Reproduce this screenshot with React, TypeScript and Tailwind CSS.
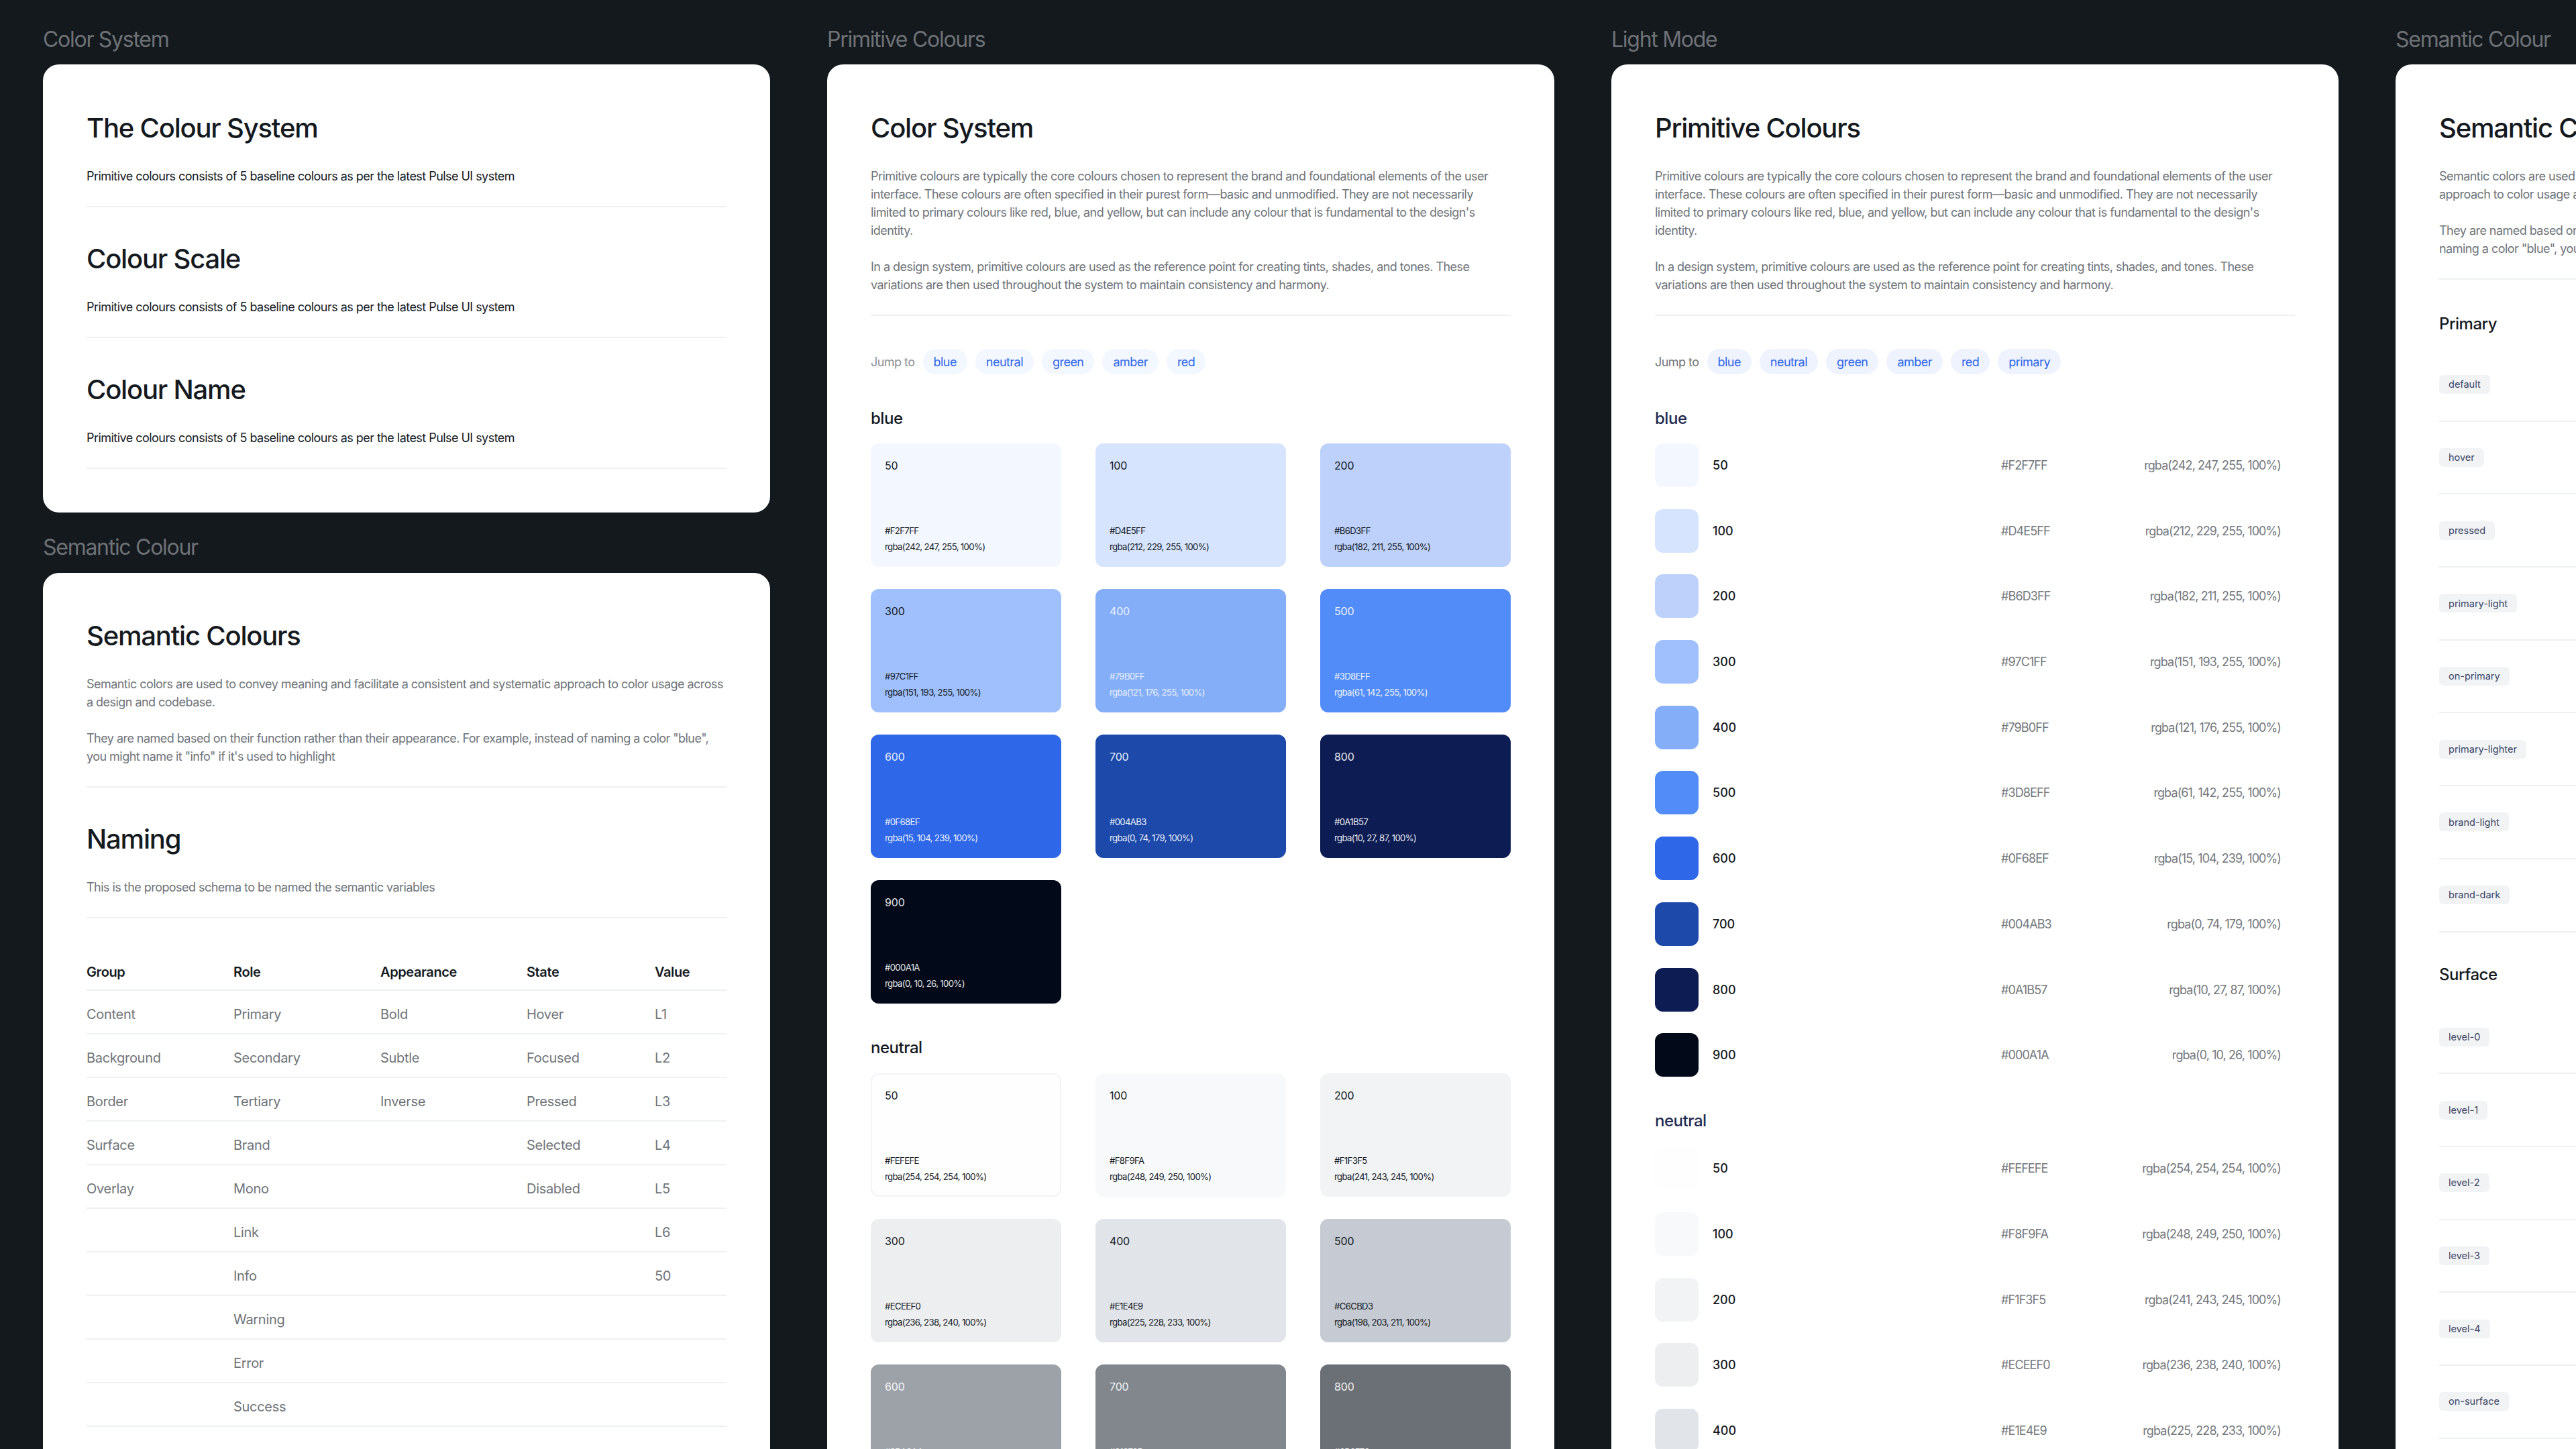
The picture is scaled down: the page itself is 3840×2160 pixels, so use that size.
import React from "react";

type Swatch = { name: string; hex: string; rgba: string; bg: string; text: string; ring?: boolean };

const blue: Swatch[] = [
  { name: "50", hex: "#F2F7FF", rgba: "rgba(242, 247, 255, 100%)", bg: "bg-[#f3f7ff]", text: "text-[#14191e]" },
  { name: "100", hex: "#D4E5FF", rgba: "rgba(212, 229, 255, 100%)", bg: "bg-[#d6e4fe]", text: "text-[#14191e]" },
  { name: "200", hex: "#B6D3FF", rgba: "rgba(182, 211, 255, 100%)", bg: "bg-[#bdd1fb]", text: "text-[#14191e]" },
  { name: "300", hex: "#97C1FF", rgba: "rgba(151, 193, 255, 100%)", bg: "bg-[#9fc0fc]", text: "text-[#14191e]" },
  { name: "400", hex: "#79B0FF", rgba: "rgba(121, 176, 255, 100%)", bg: "bg-[#85aef9]", text: "text-white/80" },
  { name: "500", hex: "#3D8EFF", rgba: "rgba(61, 142, 255, 100%)", bg: "bg-[#528cf8]", text: "text-white/90" },
  { name: "600", hex: "#0F68EF", rgba: "rgba(15, 104, 239, 100%)", bg: "bg-[#2e67e8]", text: "text-white/90" },
  { name: "700", hex: "#004AB3", rgba: "rgba(0, 74, 179, 100%)", bg: "bg-[#1d4aaa]", text: "text-white/90" },
  { name: "800", hex: "#0A1B57", rgba: "rgba(10, 27, 87, 100%)", bg: "bg-[#0d1c53]", text: "text-white/90" },
  { name: "900", hex: "#000A1A", rgba: "rgba(0, 10, 26, 100%)", bg: "bg-[#020918]", text: "text-white/90" },
];

const neutral: Swatch[] = [
  { name: "50", hex: "#FEFEFE", rgba: "rgba(254, 254, 254, 100%)", bg: "bg-[#fefefe]", text: "text-[#14191e]", ring: true },
  { name: "100", hex: "#F8F9FA", rgba: "rgba(248, 249, 250, 100%)", bg: "bg-[#f8f9fa]", text: "text-[#14191e]" },
  { name: "200", hex: "#F1F3F5", rgba: "rgba(241, 243, 245, 100%)", bg: "bg-[#f1f3f5]", text: "text-[#14191e]" },
  { name: "300", hex: "#ECEEF0", rgba: "rgba(236, 238, 240, 100%)", bg: "bg-[#eceef0]", text: "text-[#14191e]" },
  { name: "400", hex: "#E1E4E9", rgba: "rgba(225, 228, 233, 100%)", bg: "bg-[#e1e4e9]", text: "text-[#14191e]" },
  { name: "500", hex: "#C6CBD3", rgba: "rgba(198, 203, 211, 100%)", bg: "bg-[#c6cbd3]", text: "text-[#14191e]" },
  { name: "600", hex: "#9DA3AA", rgba: "rgba(157, 163, 170, 100%)", bg: "bg-[#9da2a9]", text: "text-white/90" },
  { name: "700", hex: "#81878D", rgba: "rgba(129, 135, 141, 100%)", bg: "bg-[#81878d]", text: "text-white/90" },
  { name: "800", hex: "#6B6F76", rgba: "rgba(107, 111, 118, 100%)", bg: "bg-[#6b6f76]", text: "text-white/90" },
];

const table = [
  ["Content", "Primary", "Bold", "Hover", "L1"],
  ["Background", "Secondary", "Subtle", "Focused", "L2"],
  ["Border", "Tertiary", "Inverse", "Pressed", "L3"],
  ["Surface", "Brand", "", "Selected", "L4"],
  ["Overlay", "Mono", "", "Disabled", "L5"],
  ["", "Link", "", "", "L6"],
  ["", "Info", "", "", "50"],
  ["", "Warning", "", "", ""],
  ["", "Error", "", "", ""],
  ["", "Success", "", "", ""],
];

const Label = ({ children, className = "" }: { children: React.ReactNode; className?: string }) => (
  <div className={`h-[38px] text-[32px] leading-[38px] tracking-[-0.04em] text-[#6e7276] ${className}`}>{children}</div>
);

const Title = ({ children, className = "" }: { children: React.ReactNode; className?: string }) => (
  <h1 className={`h-[48px] text-[40px] font-medium leading-[48px] tracking-[-0.03em] text-[#14191e] whitespace-nowrap ${className}`}>{children}</h1>
);

const Body = ({ children, className = "" }: { children: React.ReactNode; className?: string }) => (
  <p className={`text-[18px] leading-[27px] tracking-[-0.03em] text-[#6f7479] ${className}`}>{children}</p>
);

const Heading = ({ children, className = "" }: { children: React.ReactNode; className?: string }) => (
  <h2 className={`h-[32px] text-[24px] font-medium leading-[32px] tracking-[-0.02em] text-[#14191e] ${className}`}>{children}</h2>
);

const Rule = () => <div className="h-[2px] bg-[#eef0f2]" />;

const Overview = ({ title, first }: { title: string; first?: boolean }) => (
  <div className={first ? "" : "mt-[53px]"}>
    <Title>{title}</Title>
    <p className="mt-[34px] mb-[31px] text-[18px] leading-[27px] tracking-[-0.03em] text-[#14191e]">
      Primitive colours consists of 5 baseline colours as per the latest Pulse UI system
    </p>
    <Rule />
  </div>
);

const Intro = ({ title }: { title: string }) => (
  <>
    <Title>{title}</Title>
    <Body className="mt-[34px]">
      Primitive colours are typically the core colours chosen to represent the brand and foundational elements of the
      user interface. These colours are often specified in their purest form—basic and unmodified. They are not
      necessarily limited to primary colours like red, blue, and yellow, but can include any colour that is fundamental
      to the design's identity.
    </Body>
    <Body className="mt-[27px] mb-[31px]">
      In a design system, primitive colours are used as the reference point for creating tints, shades, and tones. These
      variations are then used throughout the system to maintain consistency and harmony.
    </Body>
    <Rule />
  </>
);

const JumpTo = ({ items, chip, label }: { items: string[]; chip: string; label: string }) => (
  <div className="mt-[49px] flex h-[38px] items-center gap-[12px] text-[18px] tracking-[-0.03em]">
    <span className={label}>Jump to</span>
    {items.map((item) => (
      <span key={item} className={`flex h-[38px] items-center rounded-full px-[16px] text-[#2f66e8] ${chip}`}>
        {item}
      </span>
    ))}
  </div>
);

const SwatchCard = ({ s }: { s: Swatch }) => (
  <div
    className={`flex h-[184px] flex-col justify-between rounded-xl pt-[21px] pb-[18px] pl-[21px] ${s.bg} ${s.text} ${
      s.ring ? "ring-2 ring-inset ring-[#f3f4f6]" : ""
    }`}
  >
    <div className="text-[16px] leading-[24px] tracking-[-0.01em]">{s.name}</div>
    <div className="text-[13.2px] leading-[24px] tracking-[-0.05em]">
      <div>{s.hex}</div>
      <div>{s.rgba}</div>
    </div>
  </div>
);

const SwatchRow = ({ s }: { s: Swatch }) => (
  <div className="mb-[32.7px] flex h-[65px] items-center text-[18px]">
    <div className={`h-[65px] w-[65px] shrink-0 rounded-xl ${s.bg}`} />
    <div className="ml-[21px] w-[430px] font-medium text-[#14191e]">{s.name}</div>
    <div className="flex-1 tracking-[-0.05em] text-[#74787d]">{s.hex}</div>
    <div className="pr-[21px] tracking-[-0.05em] text-[#74787d]">{s.rgba}</div>
  </div>
);

const Tag = ({ name }: { name: string }) => (
  <div className="flex h-[108.7px] items-center border-b-2 border-[#eef0f2]">
    <span className="flex h-[28px] items-center rounded-md bg-[#f1f3f5] px-[14px] text-[14.5px] text-[#3a4565]">{name}</span>
  </div>
);

export default function App() {
  return (
    <div className="flex h-[2160px] w-[3840px] gap-[85px] overflow-hidden bg-[#14191e] pl-[64px] pt-[40px] font-['Inter',sans-serif]">
      <div className="w-[1084px] shrink-0">
        <Label>Color System</Label>
        <div className="mt-[18px] h-[668px] rounded-3xl bg-white px-[65px] pt-[71px]">
          <Overview title="The Colour System" first />
          <Overview title="Colour Scale" />
          <Overview title="Colour Name" />
        </div>
        <Label className="mt-[33px]">Semantic Colour</Label>
        <div className="mt-[19px] h-[1400px] rounded-3xl bg-white px-[65px] pt-[70px]">
          <Title>Semantic Colours</Title>
          <Body className="mt-[34px]">
            Semantic colors are used to convey meaning and facilitate a consistent and systematic approach to color usage
            across a design and codebase.
          </Body>
          <Body className="mt-[27px] mb-[31px]">
            They are named based on their function rather than their appearance. For example, instead of naming a color
            "blue", you might name it "info" if it's used to highlight
          </Body>
          <Rule />
          <Title className="mt-[53px]">Naming</Title>
          <Body className="mt-[34px] mb-[31px]">This is the proposed schema to be named the semantic variables</Body>
          <Rule />
          <div className="grid h-[108px] grid-cols-[219px_219px_218px_191px_1fr] items-end border-b-2 border-[#eef0f2] pb-[14px] text-[20px] font-semibold leading-[24px] tracking-[-0.02em] text-[#14191e]">
            <span>Group</span>
            <span>Role</span>
            <span>Appearance</span>
            <span>State</span>
            <span>Value</span>
          </div>
          {table.map((row, i) => (
            <div
              key={i}
              className="grid h-[65px] grid-cols-[219px_219px_218px_191px_1fr] items-center border-b-2 border-[#eef0f2] pt-[6px] text-[20px] tracking-[-0.015em] text-[#6f7479]"
            >
              {row.map((cell, j) => (
                <span key={j}>{cell}</span>
              ))}
            </div>
          ))}
        </div>
      </div>

      <div className="w-[1084px] shrink-0">
        <Label>Primitive Colours</Label>
        <div className="mt-[18px] h-[2200px] rounded-3xl bg-white px-[65px] pt-[71px]">
          <Intro title="Color System" />
          <JumpTo items={["blue", "neutral", "green", "amber", "red"]} chip="bg-[#f3f7ff]" label="text-[#8b9095]" />
          <Heading className="mt-[50px]">blue</Heading>
          <div className="mt-[21px] grid grid-cols-3 gap-x-[51px] gap-y-[33px]">
            {blue.map((s) => (
              <SwatchCard key={s.name} s={s} />
            ))}
          </div>
          <Heading className="mt-[50px]">neutral</Heading>
          <div className="mt-[22px] grid grid-cols-3 gap-x-[51px] gap-y-[33px]">
            {neutral.map((s) => (
              <SwatchCard key={s.name} s={s} />
            ))}
          </div>
        </div>
      </div>

      <div className="w-[1084px] shrink-0">
        <Label>Light Mode</Label>
        <div className="mt-[18px] h-[2200px] rounded-3xl bg-white px-[65px] pt-[71px]">
          <Intro title="Primitive Colours" />
          <JumpTo items={["blue", "neutral", "green", "amber", "red", "primary"]} chip="bg-[#eef3fe]" label="text-[#6f7479]" />
          <Heading className="mt-[50px] mb-[21px] !text-[#1e2a4f]">blue</Heading>
          {blue.map((s) => (
            <SwatchRow key={s.name} s={s} />
          ))}
          <Heading className="mt-[50px] mb-[22px] !text-[#1e2a4f]">neutral</Heading>
          {neutral.slice(0, 5).map((s) => (
            <SwatchRow key={s.name} s={s} />
          ))}
        </div>
      </div>

      <div className="w-[1400px] shrink-0">
        <Label>Semantic Colour</Label>
        <div className="mt-[18px] h-[2200px] rounded-3xl bg-white px-[65px] pt-[71px]">
          <Title>Semantic Colours</Title>
          <Body className="mt-[34px]">
            Semantic colors are used to convey meaning and facilitate a consistent and systematic
            <br />
            approach to color usage across a design and codebase.
          </Body>
          <Body className="mt-[27px] mb-[31px]">
            They are named based on their function rather than their appearance. For example, instead of
            <br />
            naming a color "blue", you might name it "info" if it's used to highlight
          </Body>
          <Rule />
          <Heading className="mt-[50px] mb-[21px]">Primary</Heading>
          {["default", "hover", "pressed", "primary-light", "on-primary", "primary-lighter", "brand-light", "brand-dark"].map((n) => (
            <Tag key={n} name={n} />
          ))}
          <Heading className="mt-[47px] mb-[24px]">Surface</Heading>
          {["level-0", "level-1", "level-2", "level-3", "level-4", "on-surface"].map((n) => (
            <Tag key={n} name={n} />
          ))}
        </div>
      </div>
    </div>
  );
}
